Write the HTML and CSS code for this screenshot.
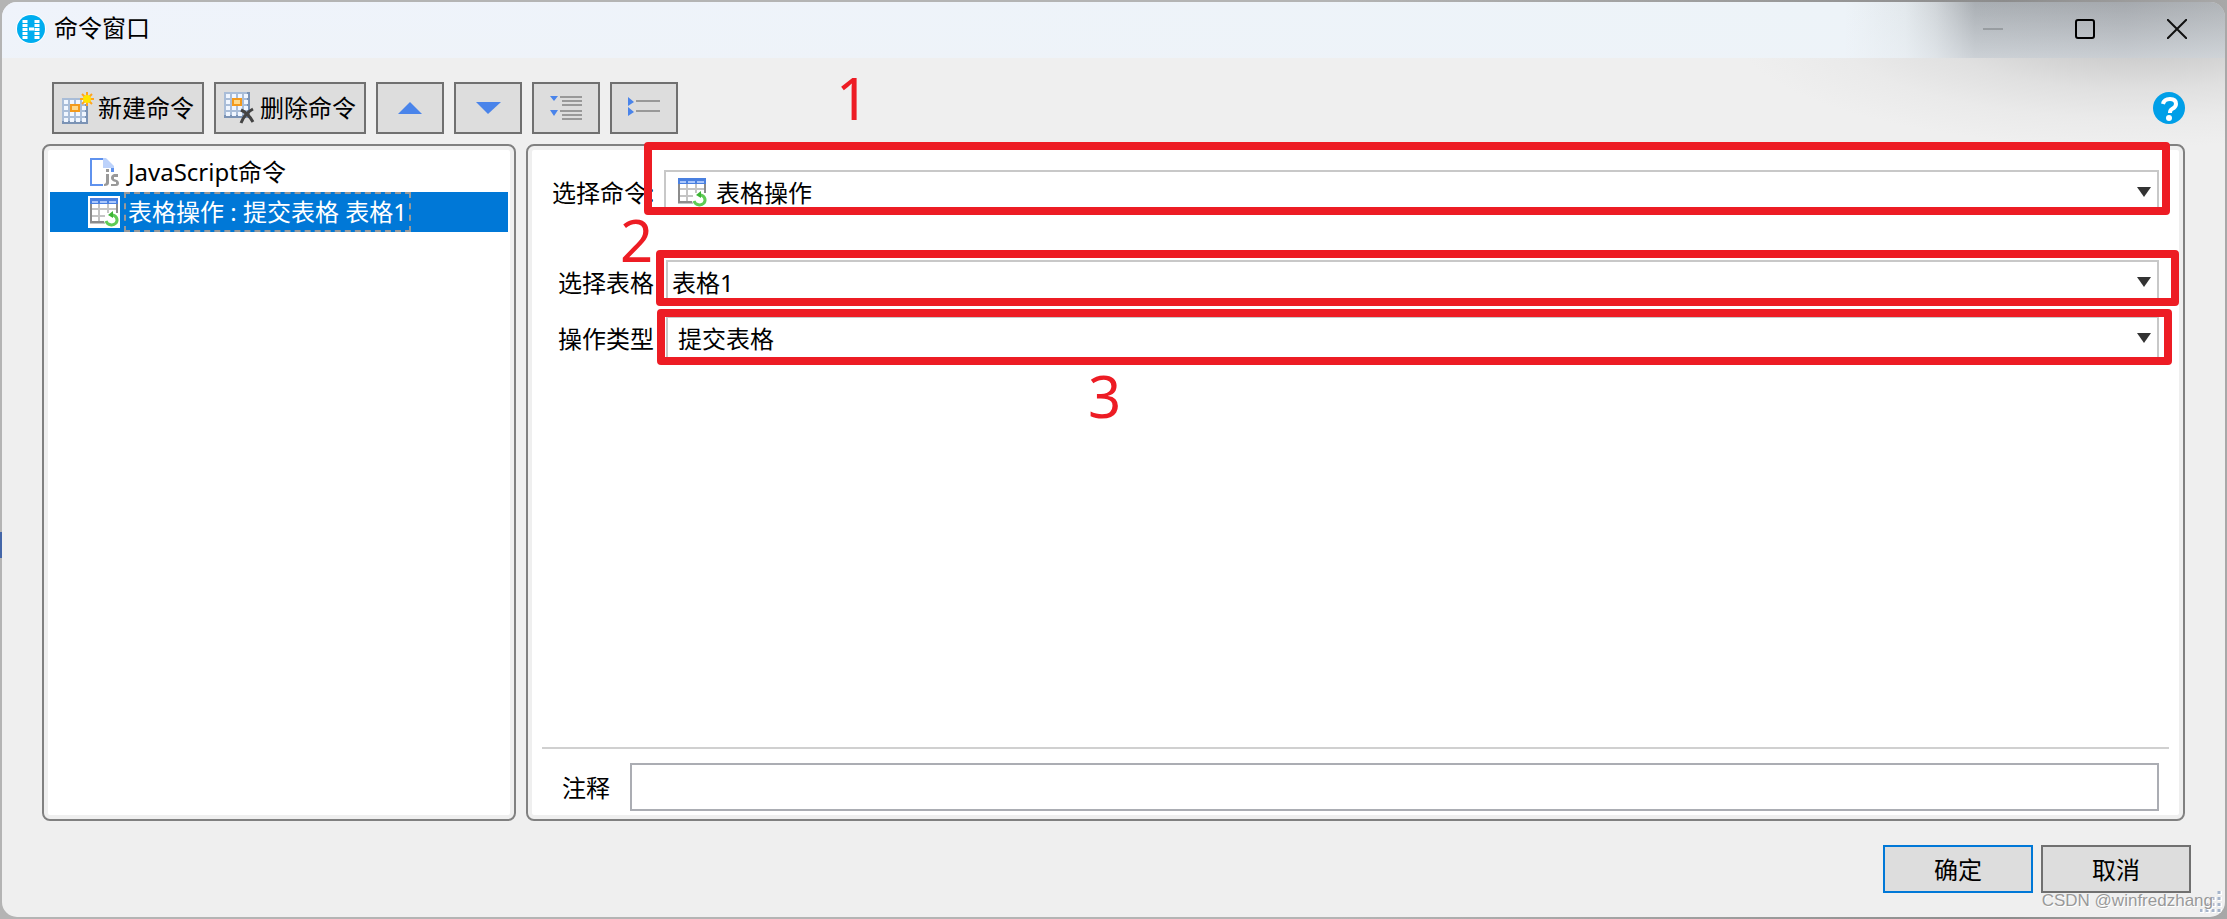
FILE: index.html
```html
<!doctype html>
<html lang="zh-CN">

<head>
    <meta charset="utf-8" />
    <meta name="viewport" content="width=device-width, initial-scale=1.0">
    <title>命令窗口</title>
    <link rel="stylesheet" href="styles.css">
</head>

<body>

    <!-- shared icons -->
    <svg class="defs" width="0" height="0" aria-hidden="true">
        <symbol id="icon-grid" viewBox="0 0 26 26">
            <rect width="26" height="26" fill="#7b93b5" />
            <path d="M0 0h23v23H0z" fill="#a9bdd8" />
            <path d="M2 2h4v4H2zM8 2h4v4H8zM14 2h4v4h-4zM20 2h4v4h-4zM2 8h4v4H2zM20 8h4v4h-4zM2 14h4v4H2zM8 14h4v4H8zM14 14h4v4h-4zM20 14h4v4h-4zM2 20h4v4H2zM8 20h4v4H8zM14 20h4v4h-4zM20 20h4v4h-4z" fill="#f0f6ff" />
            <rect x="9" y="7" width="8" height="6" fill="#ffd98a" stroke="#f39a1c" stroke-width="2" />
        </symbol>
        <symbol id="icon-table" viewBox="0 0 32 32">
            <path d="M2 3h28v26H2z" fill="#fff" />
            <path d="M3 3v24h14M3 13h26M3 20h14M11 8v19M20 8v9M29 8v9" fill="none" stroke="#c4c4c4" stroke-width="2" />
            <path d="M3 8v18h13M29 8v9" fill="none" stroke="#8c8c8c" stroke-width="2" />
            <path d="M2 2h28v6H2z" fill="#4a80e0" />
            <path d="M4 5h6v2H4zM12 5h7v2h-7zM21 5h7v2h-7z" fill="#a9c6fa" />
            <path d="M18 25a6 6 0 0 0 10 2a5 5 0 0 0-4-8" fill="none" stroke="#5fcb55" stroke-width="3" />
            <path d="M20 19l5-4v7z" fill="#3db535" />
        </symbol>
    </svg>

    <div class="window">

        <div class="titlebar">
            <svg class="logo" viewBox="0 0 30 30">
                <circle cx="15" cy="15" r="15" fill="#fff" />
                <circle cx="15" cy="15" r="14" fill="#00adef" />
                <path d="M9 6v19M21 6v19" stroke="#fff" stroke-width="5" stroke-dasharray="3 1" />
                <path d="M12 15h7" stroke="#fff" stroke-width="3" stroke-dasharray="5 1" stroke-dashoffset="-1" />
            </svg>
            <h1 class="title">命令窗口</h1>
            <div class="controls">
                <button type="button" aria-label="最小化" disabled><svg viewBox="0 0 20 20"><path d="M0 10h20" stroke="#989da1" stroke-width="2" /></svg></button>
                <button type="button" aria-label="最大化"><svg viewBox="0 0 20 20"><rect x="1" y="1" width="18" height="18" rx="2" fill="none" stroke="#000" stroke-width="2" /></svg></button>
                <button type="button" aria-label="关闭"><svg viewBox="0 0 20 20"><path d="M0 0l20 20M20 0L0 20" stroke="#111" stroke-width="2" /></svg></button>
            </div>
        </div>

        <div class="toolbar">
            <button type="button" class="btn tool text">
                <svg viewBox="0 0 32 32">
                    <use href="#icon-grid" x="0" y="6" width="26" height="26" />
                    <path d="M25 0v14M18 7h14M20 2l10 10M30 2L20 12" stroke="#ffa51e" stroke-width="2" />
                    <circle cx="25" cy="7" r="4" fill="#ffe500" />
                </svg>
                <span>新建命令</span>
            </button>
            <button type="button" class="btn tool text">
                <svg viewBox="0 0 32 32">
                    <use href="#icon-grid" x="0" y="0" width="26" height="26" />
                    <path d="M17 18q7 3 12 12M29 17q-8 4-12 14" fill="none" stroke="#444" stroke-width="3" />
                </svg>
                <span>删除命令</span>
            </button>
            <button type="button" class="btn tool" aria-label="上移"><svg viewBox="0 0 32 32"><path d="M4 22L16 10l12 12z" fill="#4a84ea" /></svg></button>
            <button type="button" class="btn tool" aria-label="下移"><svg viewBox="0 0 32 32"><path d="M4 10h25L16 22z" fill="#4a84ea" /></svg></button>
            <button type="button" class="btn tool" aria-label="全部展开">
                <svg viewBox="0 0 32 32">
                    <path d="M10 5h22M12 9h20M12 13h20M10 19h22M12 23h20M12 27h20" stroke="#999" stroke-width="2" />
                    <path d="M0 4h8L4 9zM0 18h8l-4 6z" fill="#4a84ea" />
                </svg>
            </button>
            <button type="button" class="btn tool" aria-label="全部折叠">
                <svg viewBox="0 0 32 32">
                    <path d="M8 9h24M8 19h24" stroke="#999" stroke-width="2" />
                    <path d="M0 5l6 5-6 4zM0 15l6 5-6 4z" fill="#4a84ea" />
                </svg>
            </button>
            <button type="button" class="help" aria-label="帮助">
                <svg viewBox="0 0 32 32">
                    <circle cx="16" cy="16" r="16" fill="#009fe8" />
                    <path d="M10 12q1-5 7-5q6 0 6 5q0 3-4 5q-2 1-2 4" fill="none" stroke="#fff" stroke-width="4" />
                    <circle cx="16" cy="26" r="3" fill="#fff" />
                </svg>
            </button>
            <span class="step step-1">1</span>
        </div>

        <div class="content">

            <ul class="panel commands">
                <li class="row">
                    <svg viewBox="0 0 32 32">
                        <path d="M3 2h14v2H4v24h11v2H2V2z" fill="#5f92ee" />
                        <path d="M15 2h3l8 8v6h-3v-4h-8z" fill="#bcd2fb" />
                        <path d="M23 12h3v4h-3z" fill="#5f92ee" />
                        <path d="M18 13h3v3h-3zM18 18h3v9q0 3-5 3v-2q2 0 2-2zM30 18v3h-4v2q5 1 5 4q0 3-3 3h-5v-2h5v-2q-5-1-5-4t3-4z" fill="#999" />
                    </svg>
                    <span class="name">JavaScript命令</span>
                </li>
                <li class="row selected">
                    <svg viewBox="0 0 32 32">
                        <rect width="32" height="32" fill="#fff" />
                        <use href="#icon-table" width="32" height="32" />
                    </svg>
                    <span class="name">表格操作 : 提交表格 表格1</span>
                </li>
            </ul>

            <form class="panel details">
                <div class="field first">
                    <label for="command">选择命令:</label>
                    <div class="combo with-icon">
                        <select id="command"><option>表格操作</option></select>
                        <svg class="item-icon" viewBox="0 0 32 32"><use href="#icon-table" width="32" height="32" /></svg>
                        <svg class="arrow" viewBox="0 0 14 10"><path d="M0 0h14L7 10z" fill="#333" /></svg>
                        <span class="mark mark-1"></span>
                    </div>
                </div>
                <div class="field">
                    <label for="table">选择表格</label>
                    <div class="combo">
                        <select id="table"><option>表格1</option></select>
                        <svg class="arrow" viewBox="0 0 14 10"><path d="M0 0h14L7 10z" fill="#333" /></svg>
                        <span class="mark mark-2"></span>
                        <span class="step step-2">2</span>
                    </div>
                </div>
                <div class="field">
                    <label for="action">操作类型</label>
                    <div class="combo indent">
                        <select id="action"><option>提交表格</option></select>
                        <svg class="arrow" viewBox="0 0 14 10"><path d="M0 0h14L7 10z" fill="#333" /></svg>
                        <span class="mark mark-3"></span>
                        <span class="step step-3">3</span>
                    </div>
                </div>
                <div class="note">
                    <label for="note">注释</label>
                    <input type="text" id="note">
                </div>
            </form>

        </div>

        <div class="footer">
            <button type="button" class="btn primary">确定</button>
            <button type="button" class="btn">取消</button>
        </div>

        <svg class="grip" viewBox="0 0 22 22">
            <path d="M20 0v22M14 6v16M8 12v10M2 18v4" stroke="#fff" stroke-width="4" stroke-dasharray="4 2" />
            <path d="M19 0v22M13 6v16M7 12v10M1 18v4" stroke="#a5b4cb" stroke-width="3" stroke-dasharray="3 3" />
        </svg>
        <span class="watermark">CSDN @winfredzhang</span>

    </div>

</body>

</html>
```

FILE: styles.css
```css
* {
    box-sizing: border-box;
}

body {
    margin: 0;
    padding: 2px;
    min-height: 100vh;
    display: flex;
    background: linear-gradient(#4466a8, #4466a8) 0 532px / 2px 26px no-repeat, linear-gradient(90deg, #b4b4b4 60%, #8c8c8c 90%, #a8a8a8);
    font-family: "Noto Sans", "Noto Sans CJK SC", sans-serif;
    font-size: 24px;
    line-height: 32px;
    color: #000;
}

button,
input,
select {
    font: inherit;
    color: inherit;
    margin: 0;
}

button {
    border: none;
    padding: 0;
    background: none;
}

svg {
    display: block;
    flex: none;
}

.defs {
    position: absolute;
}

.window {
    position: relative;
    flex-grow: 1;
    display: flex;
    flex-direction: column;
    border-radius: 15px;
    overflow: hidden;
    background: radial-gradient(ellipse 400px 115px at calc(100% - 90px) 30px, #c2c2c2, #d0d0d0 25%, #e0e0e0 50%, #eaeaea 75%, #efefef) no-repeat #efefef;
}

/* title bar */

.titlebar {
    display: flex;
    align-items: center;
    height: 56px;
    padding: 0 2px 2px 14px;
    background:
        linear-gradient(rgba(238, 243, 248, 0), rgba(238, 243, 248, 0.5)),
        linear-gradient(90deg, #eff3fb 0%, #edf3f8 calc(100% - 380px), #e2e8ec calc(100% - 320px), #d0d5d9 calc(100% - 290px), #a9aeb3 calc(100% - 250px), #a5a9ae calc(100% - 100px), #b0b4b8 100%);
}

.titlebar .logo {
    width: 30px;
    height: 30px;
}

.titlebar .title {
    margin: 0 0 0 8px;
    padding-bottom: 2px;
    font-size: 24px;
    font-weight: normal;
}

.titlebar .controls {
    display: flex;
    align-self: stretch;
    margin-left: auto;
}

.titlebar .controls button {
    display: flex;
    align-items: center;
    justify-content: center;
    width: 92px;
}

.titlebar .controls svg {
    width: 20px;
    height: 20px;
}

/* buttons */

.btn {
    border: 2px solid #707070;
    background-color: #ddd;
}

.toolbar {
    position: relative;
    display: flex;
    align-items: center;
    gap: 10px;
    padding: 24px 40px 10px 50px;
}

.toolbar .tool {
    display: flex;
    align-items: center;
    justify-content: center;
    width: 68px;
    height: 52px;
}

.toolbar .tool.text {
    width: 152px;
    gap: 4px;
}

.toolbar svg {
    width: 32px;
    height: 32px;
}

.toolbar .help {
    margin-left: auto;
}

/* panels */

.content {
    flex-grow: 1;
    display: flex;
    gap: 10px;
    padding: 0 40px;
}

.panel {
    margin: 0;
    border: 2px solid #808080;
    border-radius: 8px;
    background: #fff;
    box-shadow: inset 0 0 0 4px #efefef;
}

.commands {
    width: 474px;
    flex: none;
    padding: 6px;
    list-style: none;
}

.commands .row {
    display: flex;
    align-items: center;
    height: 40px;
    padding-left: 38px;
    gap: 4px;
}

.commands svg {
    width: 32px;
    height: 32px;
}

.commands .name {
    padding: 2px;
    border: 2px dashed transparent;
}

.commands .selected {
    background-color: #0078d7;
    color: white;
}

.commands .selected .name {
    border-color: #999;
}

.details {
    flex-grow: 1;
    display: flex;
    flex-direction: column;
    padding: 24px 4px 4px;
}

.field {
    display: flex;
    align-items: center;
    margin-bottom: 12px;
    padding: 0 20px 0 26px;
}

.field label {
    width: 108px;
    flex: none;
    padding-top: 2px;
}

.field.first {
    margin-bottom: 46px;
    padding-left: 20px;
}

.field.first label {
    width: 112px;
}

.combo {
    position: relative;
    flex-grow: 1;
}

.combo select {
    display: block;
    appearance: none;
    width: 100%;
    height: 44px;
    padding: 2px 40px 0 4px;
    border: 2px solid #c8c8c8;
    border-radius: 0;
    background: white;
}

.combo.indent select {
    padding-left: 10px;
}

.combo.with-icon select {
    padding-left: 50px;
}

.combo .item-icon {
    position: absolute;
    left: 12px;
    top: 6px;
    width: 32px;
    height: 32px;
}

.combo .arrow {
    position: absolute;
    right: 8px;
    top: 17px;
    width: 14px;
    height: 10px;
}

/* red guide boxes and step numbers */

.mark {
    position: absolute;
    border: 8px solid #ed1c24;
    border-radius: 4px;
    pointer-events: none;
}

.mark-1 {
    inset: -28px -11px -1px -20px;
}

.mark-2 {
    inset: -10px -20px -2px -10px;
}

.mark-3 {
    inset: -7px -13px -5px -9px;
}

.step {
    position: absolute;
    font-size: 58px;
    line-height: 44px;
    color: #ed1c24;
}

.step-1 {
    left: 834px;
    top: 18px;
}

.step-2 {
    left: -46px;
    top: -42px;
}

.step-3 {
    left: 422px;
    top: 58px;
}

.note {
    display: flex;
    align-items: center;
    margin: auto 10px 0;
    padding: 14px 10px 4px 20px;
    border-top: 2px solid #d0d0d0;
}

.note label {
    width: 68px;
    padding-top: 2px;
}

.note input {
    flex-grow: 1;
    height: 48px;
    padding: 0 8px;
    border: 2px solid #abadb3;
    background: white;
}

/* footer */

.footer {
    display: flex;
    justify-content: flex-end;
    gap: 8px;
    padding: 24px 34px;
}

.footer .btn {
    width: 150px;
    height: 48px;
    padding-top: 2px;
}

.footer .primary {
    border-color: #0078d7;
}

.grip {
    position: absolute;
    right: 3px;
    bottom: 4px;
    width: 22px;
    height: 22px;
}

.watermark {
    position: absolute;
    right: 12px;
    bottom: 6px;
    font-family: "Liberation Sans", Arial, sans-serif;
    font-size: 17px;
    line-height: 20px;
    color: #999;
    text-shadow: 1px 1px 0 #fff;
}
```
